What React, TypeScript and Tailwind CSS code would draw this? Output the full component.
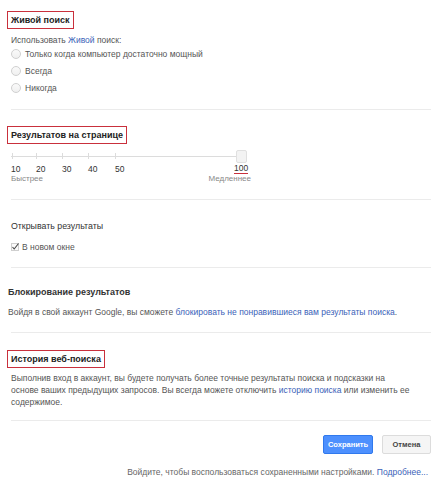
import type { ReactNode } from 'react'

const linkCls = 'text-[#3a62b8]'

function Boxed({ children }: { children: ReactNode }) {
  return (
    <div className="inline-flex h-[18px] items-center border border-[#c9303c] px-[3px] text-[9px] font-bold text-[#222]">
      {children}
    </div>
  )
}

function Sep({ className = '' }: { className?: string }) {
  return <div className={'ml-[4px] mr-[-3px] h-px bg-[#ebebeb] ' + className} />
}

function Radio({ label }: { label: string }) {
  return (
    <div className="flex h-[17px] items-center gap-[4px]">
      <span className="h-[10px] w-[10px] rounded-full border border-[#d0d0d0] bg-gradient-to-b from-[#fafafa] to-[#f0f0f0]" />
      <span>{label}</span>
    </div>
  )
}

const ticks = [
  { label: '10', w: 'w-[25px]' },
  { label: '20', w: 'w-[26px]' },
  { label: '30', w: 'w-[26px]' },
  { label: '40', w: 'w-[27px]' },
  { label: '50', w: 'w-[119px]' },
]

export default function App() {
  return (
    <div className="h-[482px] w-[432px] overflow-hidden bg-white pl-[7px] pr-[4px] pt-[11px] font-['Liberation_Sans',Arial,sans-serif] text-[8.5px] leading-[10px] text-[#555]">
      {/* live search */}
      <Boxed>Живой поиск</Boxed>
      <div className="pl-[4px]">
        <p className="mt-[6px]">
          Использовать <span className={linkCls}>Живой</span> поиск:
        </p>
        <Radio label="Только когда компьютер достаточно мощный" />
        <Radio label="Всегда" />
        <Radio label="Никогда" />
      </div>
      <Sep className="mt-[13px]" />

      {/* results per page */}
      <div className="mt-[16px]">
        <Boxed>Результатов на странице</Boxed>
      </div>
      <div className="pl-[4px]">
        <div className="relative mt-[4px] h-[16px] w-[240px]">
          <div className="absolute left-0 right-[4px] top-[8px] h-px bg-[#dcdcdc]" />
          {[1, 25, 51, 77, 104].map((x) => (
            <div key={x} className="absolute top-[5px] h-[6px] w-px bg-[#dcdcdc]" style={{ left: x }} />
          ))}
          <div className="absolute left-[225px] top-[2px] h-[13px] w-[11px] rounded-[2px] border border-[#e0e0e0] bg-[#f3f3f3]" />
        </div>
        <div className="flex text-[8.5px] text-[#333]">
          {ticks.map((t) => (
            <span key={t.label} className={t.w}>
              {t.label}
            </span>
          ))}
          <span className="border-b border-[#c9303c] leading-[9px]">100</span>
        </div>
        <div className="flex w-[240px] justify-between text-[8px] text-[#888]">
          <span>Быстрее</span>
          <span>Медленнее</span>
        </div>
      </div>
      <Sep className="mt-[15px]" />

      {/* open results */}
      <div className="pl-[4px]">
        <p className="mt-[20px] text-[8.8px] leading-[12px] text-[#333]">Открывать результаты</p>
        <div className="mt-[9px] flex h-[12px] items-center gap-[3px]">
          <svg width="8" height="8" viewBox="0 0 8 8" aria-hidden="true">
            <rect x="0.5" y="0.5" width="7" height="7" fill="#fafafa" stroke="#cfcfcf" />
            <polyline points="1.5,4 3.2,6 7.5,0.5" fill="none" stroke="#444" strokeWidth="1.1" />
          </svg>
          <span>В новом окне</span>
        </div>
      </div>
      <Sep className="mt-[14px]" />

      {/* blocking */}
      <div className="pl-[1px]">
        <p className="mt-[18px] text-[9px] font-bold leading-[12px] text-[#333]">Блокирование результатов</p>
        <p className="mt-[8px] leading-[12px]">
          Войдя в свой аккаунт Google, вы сможете{' '}
          <span className={linkCls}>блокировать не понравившиеся вам результаты поиска</span>.
        </p>
      </div>
      <Sep className="mt-[14px]" />

      {/* history */}
      <div className="mt-[17px]">
        <Boxed>История веб-поиска</Boxed>
      </div>
      <p className="mt-[4px] pl-[4px] leading-[12px]">
        Выполнив вход в аккаунт, вы будете получать более точные результаты поиска и подсказки на
        <br />
        основе ваших предыдущих запросов. Вы всегда можете отключить{' '}
        <span className={linkCls}>историю поиска</span> или изменить ее
        <br />
        содержимое.
      </p>
      <Sep className="mt-[12px]" />

      {/* actions */}
      <div className="mt-[14px] flex justify-end gap-[9px]">
        <button className="h-[19px] w-[50px] rounded-[2px] border border-[#3079ed] bg-[#4d90fe] text-[7.5px] font-bold text-white">
          Сохранить
        </button>
        <button className="mr-[-3px] h-[19px] w-[49px] rounded-[2px] border border-[#dcdcdc] bg-[#f5f5f5] text-[7.5px] font-bold text-[#444]">
          Отмена
        </button>
      </div>
      <p className="mt-[12px] text-right leading-[12px] text-[#666]">
        Войдите, чтобы воспользоваться сохраненными настройками. <span className={linkCls}>Подробнее...</span>
      </p>
    </div>
  )
}
